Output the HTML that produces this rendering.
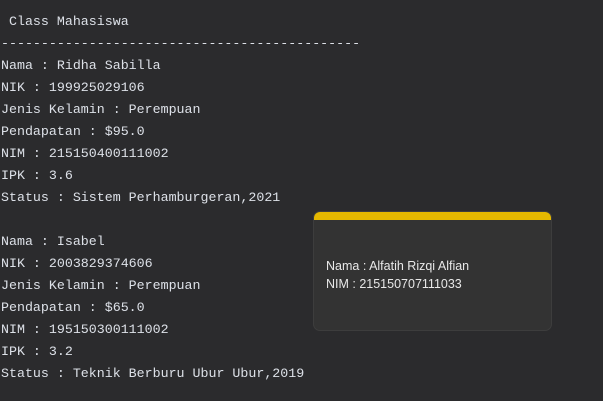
<!DOCTYPE html>
<html><head><style>
body{margin:0;width:603px;height:401px;background:#2b2b2d;overflow:hidden;position:relative}
pre{margin:0;position:absolute;left:1px;top:11px;font:13.3px/22px "Liberation Mono",monospace;color:#dde1e8}
.box{position:absolute;left:313px;top:211px;width:237px;height:118px;background:#333;border:1px solid #3d3d3d;border-radius:7px;overflow:hidden}
.bar{height:8px;background:#e5b800}
.t{position:absolute;left:12px;top:45px;font:12.5px/18px "Liberation Sans",sans-serif;color:#e8e8e8}
</style></head><body>
<pre> Class Mahasiswa
---------------------------------------------
Nama : Ridha Sabilla
NIK : 199925029106
Jenis Kelamin : Perempuan
Pendapatan : $95.0
NIM : 215150400111002
IPK : 3.6
Status : Sistem Perhamburgeran,2021

Nama : Isabel
NIK : 2003829374606
Jenis Kelamin : Perempuan
Pendapatan : $65.0
NIM : 195150300111002
IPK : 3.2
Status : Teknik Berburu Ubur Ubur,2019</pre>
<div class="box"><div class="bar"></div><div class="t">Nama : Alfatih Rizqi Alfian<br>NIM : 215150707111033</div></div>
</body></html>
